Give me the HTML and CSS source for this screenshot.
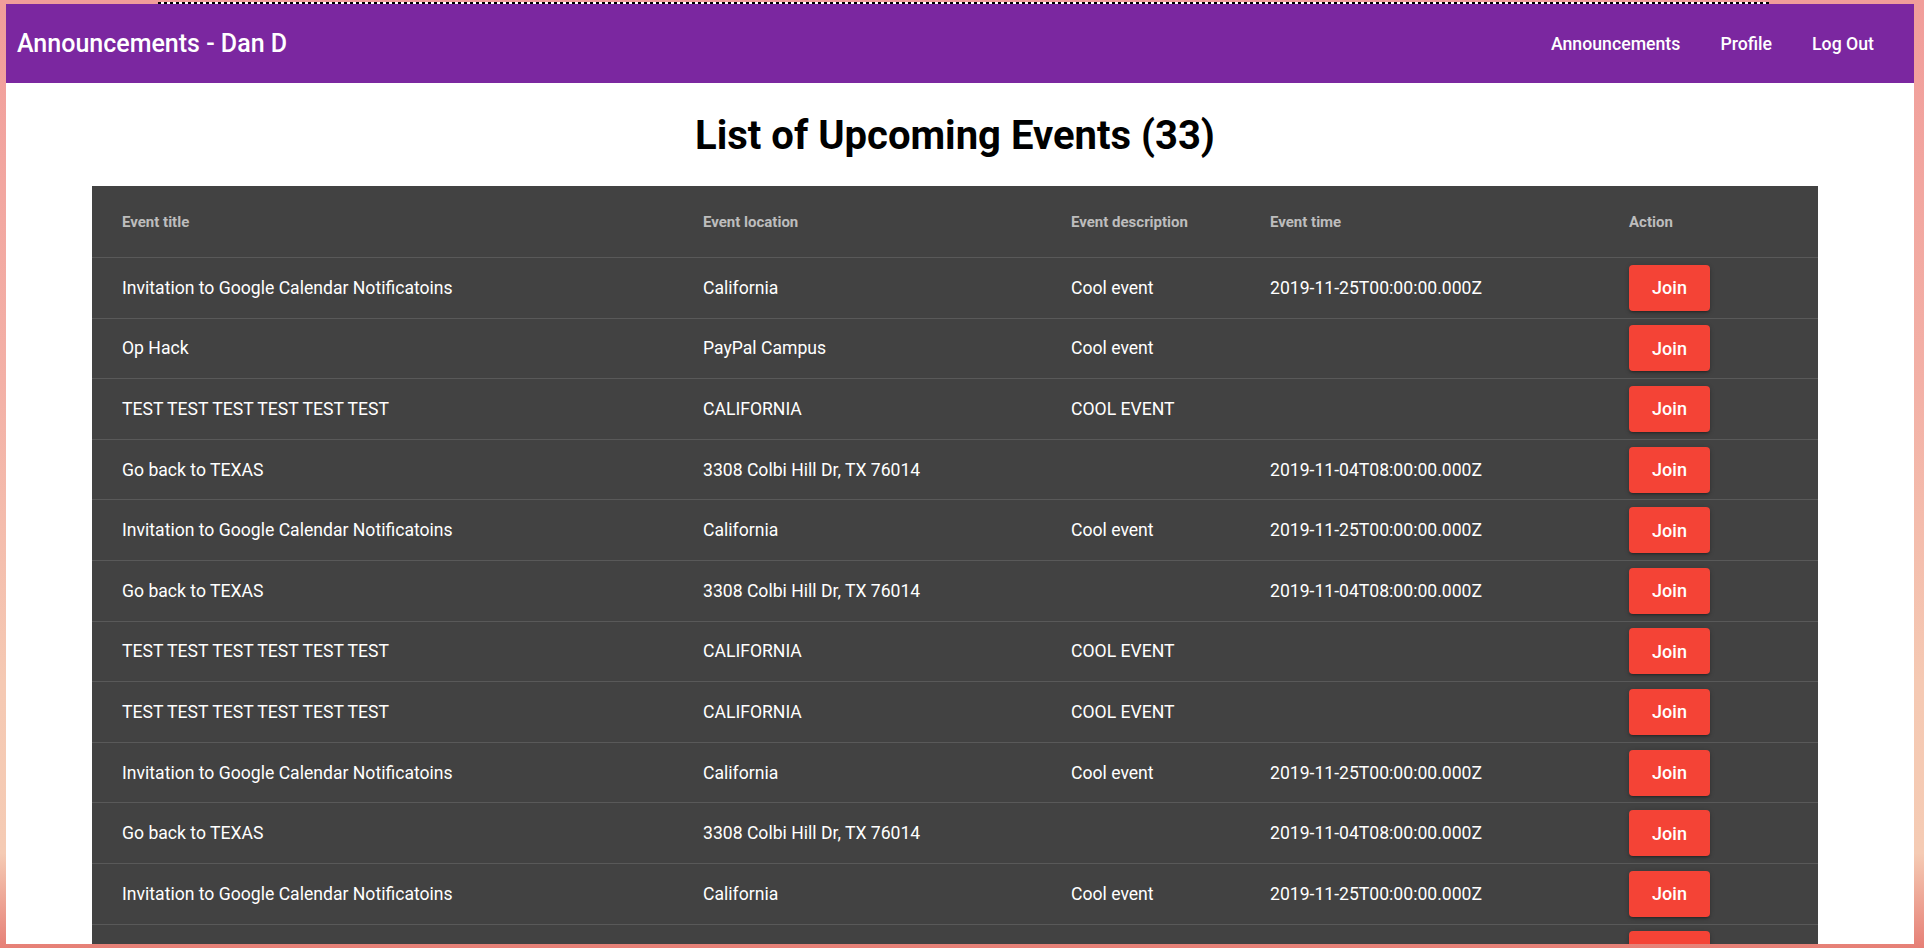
FILE: index.html
```html
<!DOCTYPE html>
<html lang="en">
<head>
<meta charset="utf-8">
<title>Announcements - Dan D</title>
<link rel="stylesheet" href="styles.css">
</head>
<body>
<div class="dashes"></div>
<div class="page">
  <nav class="navbar">
    <a class="brand" href="#">Announcements - Dan D</a>
    <ul class="nav-links">
      <li><a href="#">Announcements</a></li>
      <li><a href="#">Profile</a></li>
      <li><a href="#">Log Out</a></li>
    </ul>
  </nav>
  <main class="content">
    <h1 class="title">List of Upcoming Events (33)</h1>
    <table class="events">
      <colgroup>
        <col class="c-title"><col class="c-loc"><col class="c-desc"><col class="c-time"><col class="c-act">
      </colgroup>
      <thead>
        <tr><th>Event title</th><th>Event location</th><th>Event description</th><th>Event time</th><th>Action</th></tr>
      </thead>
      <tbody>
        <tr><td>Invitation to Google Calendar Notificatoins</td><td>California</td><td>Cool event</td><td>2019-11-25T00:00:00.000Z</td><td><button class="join">Join</button></td></tr>
        <tr><td>Op Hack</td><td>PayPal Campus</td><td>Cool event</td><td></td><td><button class="join">Join</button></td></tr>
        <tr><td>TEST TEST TEST TEST TEST TEST</td><td>CALIFORNIA</td><td>COOL EVENT</td><td></td><td><button class="join">Join</button></td></tr>
        <tr><td>Go back to TEXAS</td><td>3308 Colbi Hill Dr, TX 76014</td><td></td><td>2019-11-04T08:00:00.000Z</td><td><button class="join">Join</button></td></tr>
        <tr><td>Invitation to Google Calendar Notificatoins</td><td>California</td><td>Cool event</td><td>2019-11-25T00:00:00.000Z</td><td><button class="join">Join</button></td></tr>
        <tr><td>Go back to TEXAS</td><td>3308 Colbi Hill Dr, TX 76014</td><td></td><td>2019-11-04T08:00:00.000Z</td><td><button class="join">Join</button></td></tr>
        <tr><td>TEST TEST TEST TEST TEST TEST</td><td>CALIFORNIA</td><td>COOL EVENT</td><td></td><td><button class="join">Join</button></td></tr>
        <tr><td>TEST TEST TEST TEST TEST TEST</td><td>CALIFORNIA</td><td>COOL EVENT</td><td></td><td><button class="join">Join</button></td></tr>
        <tr><td>Invitation to Google Calendar Notificatoins</td><td>California</td><td>Cool event</td><td>2019-11-25T00:00:00.000Z</td><td><button class="join">Join</button></td></tr>
        <tr><td>Go back to TEXAS</td><td>3308 Colbi Hill Dr, TX 76014</td><td></td><td>2019-11-04T08:00:00.000Z</td><td><button class="join">Join</button></td></tr>
        <tr><td>Invitation to Google Calendar Notificatoins</td><td>California</td><td>Cool event</td><td>2019-11-25T00:00:00.000Z</td><td><button class="join">Join</button></td></tr>
        <tr><td>Op Hack</td><td>PayPal Campus</td><td>Cool event</td><td></td><td><button class="join">Join</button></td></tr>
        <tr><td>TEST TEST TEST TEST TEST TEST</td><td>CALIFORNIA</td><td>COOL EVENT</td><td></td><td><button class="join">Join</button></td></tr>
      </tbody>
    </table>
  </main>
</div>
</body>
</html>
```
FILE: styles.css
```css
html {
  height: 100%;
  background: linear-gradient(180deg, #f19d9a 0%, #f3b0a6 40%, #f5c9b3 72%, #f5cbb4 90%, #e67f76 100%);
}
body {
  margin: 0;
  padding: 4px 10px 4px 6px;
  height: 948px;
  box-sizing: border-box;
  overflow: hidden;
  font-family: Roboto, "Liberation Sans", sans-serif;
  position: relative;
}
.dashes {
  position: absolute;
  top: 2px;
  left: 158px;
  width: 1611px;
  height: 2px;
  background: repeating-linear-gradient(90deg, #000 0 3px, #fff 3px 6px);
}
.page {
  background: #fff;
  height: 940px;
  overflow: hidden;
}
.navbar {
  height: 79px;
  background: #7b27a0;
  display: flex;
  align-items: center;
  justify-content: space-between;
  padding: 0 20px 0 11px;
}
.brand {
  color: #fff;
  text-decoration: none;
  font-size: 25px;
  font-weight: 500;
}
.nav-links {
  list-style: none;
  margin: 0;
  padding: 0;
  display: flex;
}
.nav-links a {
  display: block;
  color: #fff;
  text-decoration: none;
  font-size: 17.7px;
  font-weight: 500;
  padding: 0 20px;
}
.content {
  padding: 0 96px 0 86px;
}
.title {
  margin: 25px 0 22px;
  text-align: center;
  font-size: 40px;
  line-height: 56px;
  font-weight: 700;
  color: #000;
}
.events {
  width: 1726px;
  table-layout: fixed;
  border-collapse: collapse;
  background: #424242;
}
.c-title { width: 581px; }
.c-loc { width: 368px; }
.c-desc { width: 199px; }
.c-time { width: 359px; }
.c-act { width: 219px; }
.events th,
.events td {
  text-align: left;
  padding: 0 0 0 30px;
  vertical-align: middle;
  white-space: nowrap;
}
.events th {
  height: 71px;
  font-size: 15px;
  font-weight: 700;
  color: #bdbdbd;
  border-bottom: 1px solid #595959;
}
.events td {
  height: 59.6px;
  font-size: 17.6px;
  color: #fff;
  border-bottom: 1px solid #595959;
}
.join {
  width: 81px;
  height: 46px;
  border: none;
  border-radius: 4px;
  background: #f44336;
  color: #fff;
  font-family: Roboto, "Liberation Sans", sans-serif;
  font-size: 18px;
  font-weight: 500;
  cursor: pointer;
  box-shadow: 0 2px 2px rgba(0,0,0,.14), 0 3px 1px -2px rgba(0,0,0,.12), 0 1px 5px rgba(0,0,0,.2);
}
```
